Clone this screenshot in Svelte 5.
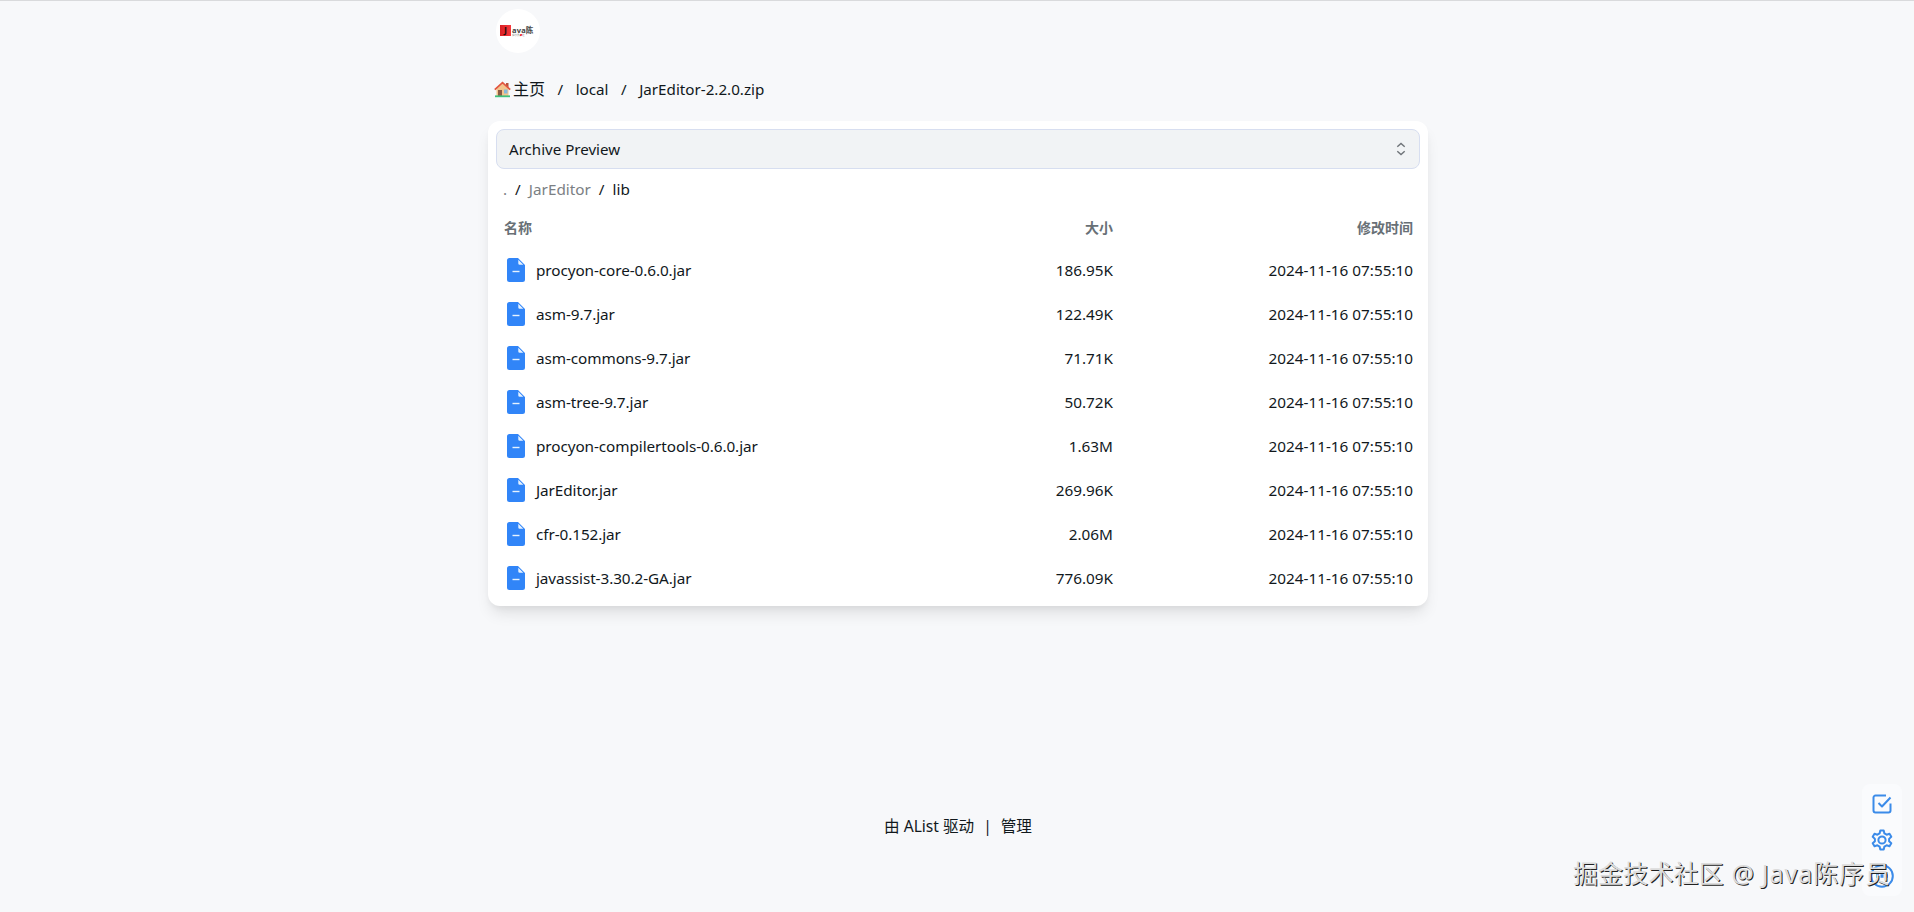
<script>
  const files = [
    { name: 'procyon-core-0.6.0.jar', size: '186.95K', modified: '2024-11-16 07:55:10' },
    { name: 'asm-9.7.jar', size: '122.49K', modified: '2024-11-16 07:55:10' },
    { name: 'asm-commons-9.7.jar', size: '71.71K', modified: '2024-11-16 07:55:10' },
    { name: 'asm-tree-9.7.jar', size: '50.72K', modified: '2024-11-16 07:55:10' },
    { name: 'procyon-compilertools-0.6.0.jar', size: '1.63M', modified: '2024-11-16 07:55:10' },
    { name: 'JarEditor.jar', size: '269.96K', modified: '2024-11-16 07:55:10' },
    { name: 'cfr-0.152.jar', size: '2.06M', modified: '2024-11-16 07:55:10' },
    { name: 'javassist-3.30.2-GA.jar', size: '776.09K', modified: '2024-11-16 07:55:10' },
  ];
</script>

<div class="page">
  <header class="header">
    <!-- Round site logo -->
    <div class="logo">
      <div class="logo-row">
        <span class="logo-mark">J</span><span class="logo-name">ava陈</span>
      </div>
      <div class="logo-sub">程序员<i>●</i>社</div>
    </div>
  </header>

  <nav class="breadcrumb">
    <a class="home" href="#home">
      <svg width="17" height="17" viewBox="0 0 17 17">
        <rect x="12" y="2" width="2.5" height="4" fill="#b5533c" />
        <path d="M2.5 8 8.5 2.5 14.5 8v7h-12z" fill="#f3c58d" />
        <path d="M.8 8.6 8.5 1.6l7.7 7" fill="none" stroke="#e2563f" stroke-width="1.8" />
        <rect x="4" y="9" width="4" height="6" fill="#8a5a44" />
        <rect x="10" y="8.5" width="3.5" height="4" fill="#86b9dc" />
        <rect x="1" y="14.4" width="15" height="1.8" fill="#3fc07c" />
      </svg>
      主页
    </a>
    <span class="slash">/</span>
    <a href="#local">local</a>
    <span class="slash">/</span>
    <a href="#zip">JarEditor-2.2.0.zip</a>
  </nav>

  <main class="card">
    <button class="select">
      <span>Archive Preview</span>
      <svg width="10" height="14" viewBox="0 0 10 14" fill="none" stroke="#6f7479" stroke-width="1.4">
        <path d="M1.3 4.8 5 1.4l3.7 3.4M1.3 9.2 5 12.6l3.7-3.4" />
      </svg>
    </button>

    <div class="inner-path">
      <span class="dim">.</span>
      <span>/</span>
      <span class="dim">JarEditor</span>
      <span>/</span>
      <span>lib</span>
    </div>

    <div class="row head">
      <span class="name">名称</span>
      <span class="size">大小</span>
      <span class="modified">修改时间</span>
    </div>
    {#each files as file}
      <div class="row">
        <span class="name">
          <svg width="18" height="24" viewBox="0 0 18 24">
            <path d="M2.5 0H11l7 7v14.5a2.5 2.5 0 0 1-2.5 2.5h-13A2.5 2.5 0 0 1 0 21.5v-19A2.5 2.5 0 0 1 2.5 0z" fill="#3185f8" />
            <path d="M11.3 1.8v3.6a1.4 1.4 0 0 0 1.4 1.4h3.6z" fill="#e6f2ff" />
            <path d="M5.5 13.5h7" stroke="#e6f2ff" stroke-width="1.4" />
          </svg>
          {file.name}
        </span>
        <span class="size">{file.size}</span>
        <span class="modified">{file.modified}</span>
      </div>
    {/each}
  </main>

  <footer class="footer">
    <a href="#alist">由 AList 驱动</a>
    <span>|</span>
    <a href="#manage">管理</a>
  </footer>
</div>

<div class="toolbar">
  <svg width="24" height="24" viewBox="0 0 24 24">
    <path d="M20.5 11.5v7a2 2 0 0 1-2 2h-13a2 2 0 0 1-2-2v-13a2 2 0 0 1 2-2h10.5" />
    <path d="m8.5 11 3.5 3.5 8.5-9" />
  </svg>
  <svg width="24" height="24" viewBox="0 0 24 24">
    <circle cx="12" cy="12" r="3.6" />
    <path d="M10.3 2.5h3.4l.7 2.9 2.2 1.3 2.9-.9 1.8 3-2.2 2.1v2.3l2.2 2-1.8 3-2.9-.9-2.2 1.3-.7 2.9h-3.4l-.7-2.9-2.2-1.3-2.9.9-1.8-3 2.2-2v-2.3l-2.2-2.1 1.8-3 2.9.9 2.2-1.3z" />
  </svg>
  <svg width="24" height="24" viewBox="0 0 24 24">
    <circle cx="12" cy="12" r="10.8" />
    <path d="M6 12h3M10.5 12h3M15 12h3" stroke-width="3.4" />
  </svg>
</div>

<div class="watermark">掘金技术社区 @ <span>Java陈序员</span></div>

<style>
  :global(body) {
    background: #f7f8fa;
  }

  .page {
    box-sizing: border-box;
    width: 100%;
    height: 912px;
    padding-left: 2px;
    border-top: 1px solid #d9dadc;
    display: flex;
    flex-direction: column;
    align-items: center;
    font-family: "Noto Sans", "Noto Sans CJK SC", sans-serif;
    font-size: 15.3px;
    line-height: 24px;
    color: #11181c;
    overflow: hidden;
  }

  a {
    color: inherit;
    text-decoration: none;
  }

  .header {
    width: 940px;
    height: 64px;
    padding: 8px 0 0 8px;
    box-sizing: border-box;
  }

  .logo {
    width: 44px;
    height: 44px;
    border-radius: 50%;
    background: #fff;
    box-sizing: border-box;
    padding: 16px 0 0 4px;
    white-space: nowrap;
  }

  .logo-row {
    display: flex;
    align-items: center;
    height: 10px;
    line-height: 10px;
    font-weight: bold;
  }

  .logo-mark {
    width: 11px;
    height: 11px;
    flex: none;
    background: linear-gradient(90deg, #d81f24, #f8383c);
    color: #2a0a0a;
    font-size: 9px;
    text-align: center;
  }

  .logo-name {
    font-size: 7.5px;
    letter-spacing: 0.2px;
    color: #444;
    margin-left: 1px;
  }

  .logo-sub {
    font-size: 2.5px;
    line-height: 3px;
    margin: -1px 0 0 12px;
    color: #888;
  }

  .logo-sub i {
    color: #e8262a;
  }

  .breadcrumb {
    width: 940px;
    height: 48px;
    padding-left: 6px;
    box-sizing: border-box;
    display: flex;
    align-items: center;
    font-size: 15.2px;
  }

  .home {
    display: flex;
    align-items: center;
    gap: 2px;
    font-size: 16px;
  }

  .slash {
    margin: 0 12.5px;
  }

  .card {
    width: 940px;
    height: 485px;
    margin-top: 8px;
    padding: 8px;
    box-sizing: border-box;
    flex: none;
    border-radius: 12px;
    background: #fff;
    box-shadow: 0 10px 15px -3px rgba(0, 0, 0, 0.1), 0 4px 6px -2px rgba(0, 0, 0, 0.05);
  }

  .select {
    width: 100%;
    height: 40px;
    padding: 0 13px 0 12px;
    display: flex;
    align-items: center;
    justify-content: space-between;
    font: inherit;
    font-size: 15.1px;
    color: inherit;
    background: #f1f3f5;
    border: 1px solid #d7def0;
    border-radius: 8px;
  }

  .inner-path {
    display: flex;
    gap: 8px;
    height: 40px;
    padding-left: 7px;
    align-items: center;
  }

  .dim {
    color: #7b8084;
  }

  .row {
    display: flex;
    align-items: center;
    height: 44px;
    padding: 0 7px 0 8px;
  }

  .head {
    height: 37px;
    margin-bottom: 2px;
    font-size: 14px;
    font-weight: bold;
    color: #687076;
  }

  .name {
    display: flex;
    align-items: center;
    gap: 11px;
    width: 455px;
    letter-spacing: -0.08px;
  }

  .name svg {
    margin-left: 3px;
  }

  .size {
    width: 154px;
    text-align: right;
  }

  .modified {
    flex: 1;
    text-align: right;
  }

  .footer {
    display: flex;
    gap: 9px;
    margin-top: 208px;
    font-size: 15.6px;
  }

  /* Floating actions in the corner */
  .toolbar {
    position: absolute;
    right: 12px;
    bottom: 16px;
    width: 40px;
    height: 112px;
    box-sizing: border-box;
    padding-top: 8px;
    display: flex;
    flex-direction: column;
    align-items: center;
    gap: 12px;
    border-radius: 8px;
    background: #fafbfd;
  }

  .toolbar svg {
    fill: none;
    stroke: #3b8be9;
    stroke-width: 2;
    stroke-linejoin: round;
  }

  .watermark {
    position: absolute;
    right: 23px;
    bottom: 21px;
    font-family: "Noto Sans", "Noto Sans CJK SC", sans-serif;
    font-size: 25px;
    line-height: 36px;
    color: #dcdcdc;
    text-shadow: 1px 1px 0 #222;
    word-spacing: 1px;
    letter-spacing: 0.15px;
    white-space: nowrap;
  }

  .watermark span {
    letter-spacing: 0.95px;
  }
</style>
